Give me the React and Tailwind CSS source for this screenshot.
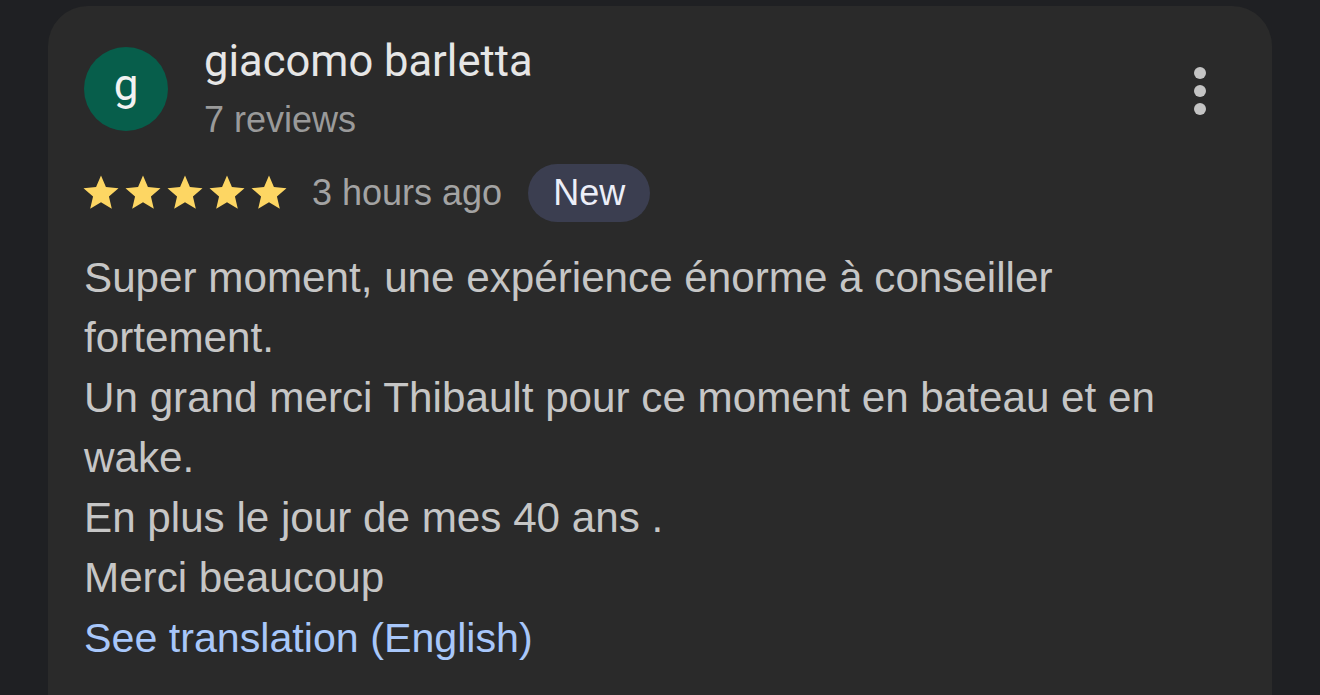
function Star() {
    return (
        <svg viewBox="0 0 24 24" className="h-[42px] w-[42px] fill-[#fdd663]">
            <path d="M12 17.27L18.18 21l-1.64-7.03L22 9.24l-7.19-.61L12 2 9.19 8.63 2 9.24l5.46 4.73L5.82 21z" />
        </svg>
    )
}

export default function App() {
    const lines = [
        "Super moment, une expérience énorme à conseiller fortement.",
        "Un grand merci Thibault pour ce moment en bateau et en wake.",
        "En plus le jour de mes 40 ans .",
        "Merci beaucoup",
    ];

    return (
        <div className="h-[695px] bg-[#1f2023] px-[48px] pt-[6px] overflow-hidden">
            <div className="rounded-t-[40px] bg-[#2a2a2a] pl-[36px] pr-[36px] pt-[41px] h-[689px]">
                {/* Header */}
                <div className="flex flex-row items-start">
                    <div className="flex h-[84px] w-[84px] shrink-0 items-center justify-center rounded-full bg-[#075e4b]">
                        <span className="font-['Roboto',sans-serif] text-[44px] leading-none text-[#f2f2f2] -mt-[8px]">g</span>
                    </div>
                    <div className="ml-[36px] -mt-[10px] flex flex-1 flex-col">
                        <p className="font-['Roboto',sans-serif] text-[43.5px] leading-[50px] text-[#e6e6e6]">giacomo barletta</p>
                        <p className="font-['Liberation_Sans',sans-serif] text-[36px] leading-[44px] mt-[11px] text-[#9a9a9a]">7 reviews</p>
                    </div>
                    <button className="mr-[12px] mt-[20px] flex h-[48px] w-[48px] flex-col items-center justify-center gap-[6px]">
                        <span className="h-[12px] w-[12px] rounded-full bg-[#c4c4c4]" />
                        <span className="h-[12px] w-[12px] rounded-full bg-[#c4c4c4]" />
                        <span className="h-[12px] w-[12px] rounded-full bg-[#c4c4c4]" />
                    </button>
                </div>

                {/* Rating row */}
                <div className="mt-[22px] flex flex-row items-center">
                    <div className="-ml-[4px] flex flex-row">
                        <Star /><Star /><Star /><Star /><Star />
                    </div>
                    <span className="ml-[22px] font-['Liberation_Sans',sans-serif] text-[36px] text-[#a3a3a3]">3 hours ago</span>
                    <span className="ml-[26px] flex h-[58px] items-center rounded-full bg-[#3b3e50] px-[25px] font-['Liberation_Sans',sans-serif] text-[36px] font-medium text-[#eceef8]">New</span>
                </div>

                {/* Body */}
                <div className="mt-[26px] font-['Liberation_Sans',sans-serif] text-[42.2px] leading-[60px] text-[#c6c6c6]">
                    {lines.map((l, i) => (
                        <p key={i}>{l}</p>
                    ))}
                    <p className="text-[41.2px] text-[#a8c7fa]">See translation (English)</p>
                </div>
            </div>
        </div>
    )
}
